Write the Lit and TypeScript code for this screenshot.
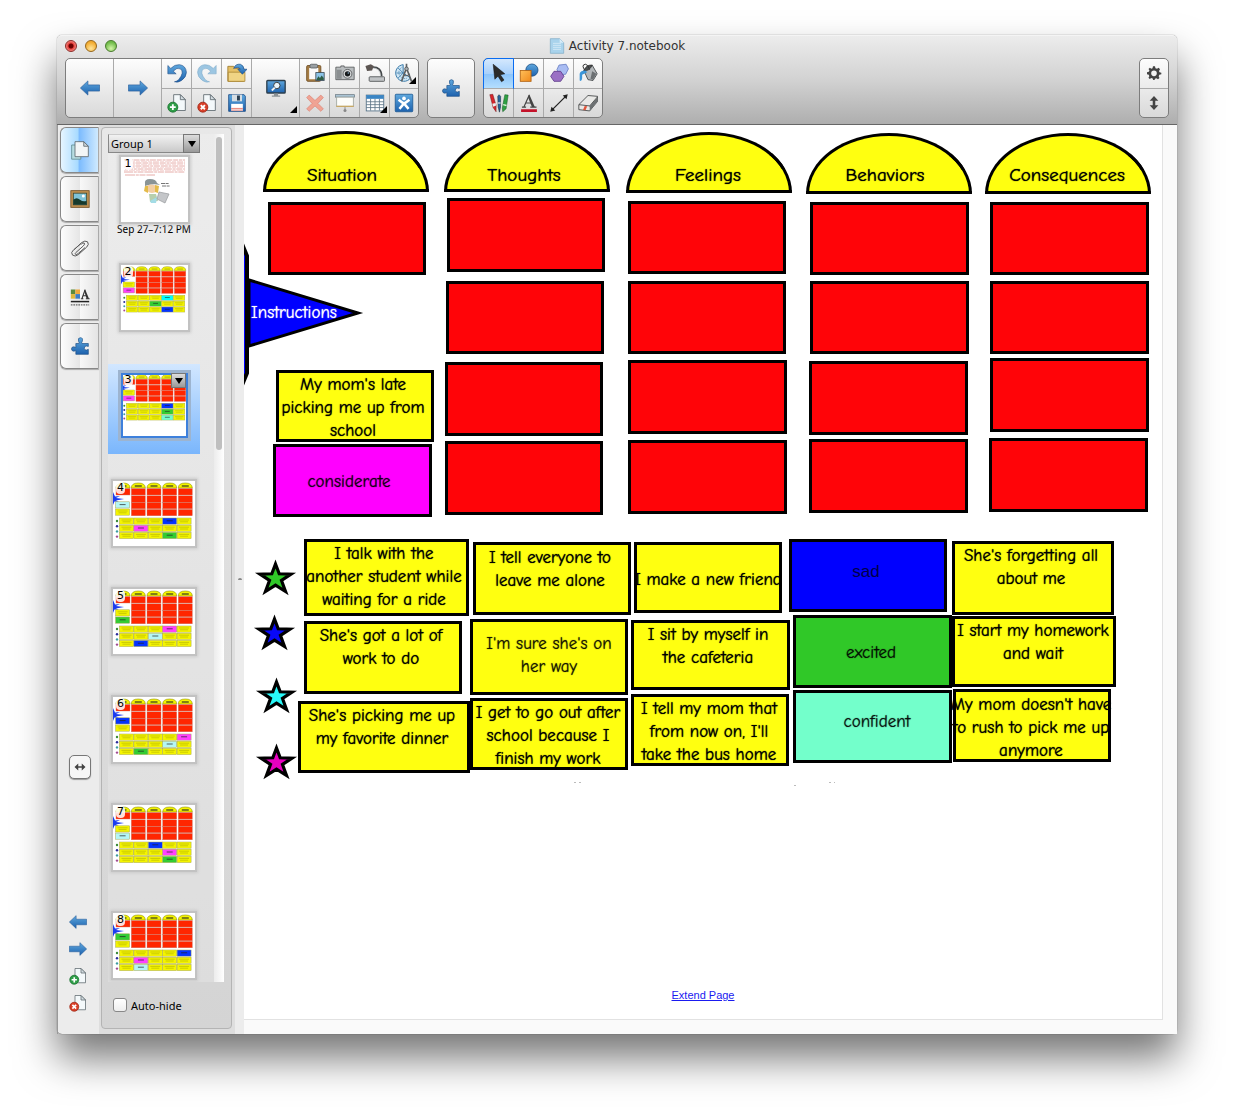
import { LitElement, html, svg, css, nothing } from "lit";
import { customElement, property, state } from "lit/decorators.js";
import { classMap } from "lit/directives/class-map.js";
import { styleMap } from "lit/directives/style-map.js";

type Box = [x: number, y: number, w: number, h: number];

const box = ([x, y, w, h]: Box) =>
  styleMap({ left: `${x}px`, top: `${y}px`, width: `${w}px`, height: `${h}px` });

/* ---------- board content ---------- */

const domes: Box[] = [
  [19, 6, 166, 61], [200, 6, 166, 61], [382, 7, 166, 61], [562, 8, 166, 61], [741, 8, 166, 61],
];

const slots: Box[] = [
  [24, 77, 158, 73],
  [203, 73, 158, 74], [202, 156, 158, 73], [201, 237, 158, 74], [201, 316, 158, 74],
  [384, 76, 158, 73], [384, 156, 158, 73], [384, 235, 159, 74], [384, 315, 159, 74],
  [566, 77, 159, 73], [566, 156, 159, 73], [565, 236, 159, 74], [565, 314, 159, 74],
  [746, 77, 159, 73], [746, 156, 159, 73], [746, 233, 159, 74], [745, 313, 159, 74],
];

const cards: { at: Box; tone: string }[] = [
  { at: [32, 245, 158, 72], tone: "yellow" },
  { at: [29, 319, 159, 73], tone: "magenta" },
  { at: [60, 414, 165, 77], tone: "yellow" },
  { at: [229, 417, 158, 73], tone: "yellow" },
  { at: [390, 417, 148, 71], tone: "yellow" },
  { at: [545, 414, 158, 73], tone: "blue" },
  { at: [708, 416, 162, 74], tone: "yellow" },
  { at: [60, 496, 158, 73], tone: "yellow" },
  { at: [226, 494, 158, 76], tone: "yellow" },
  { at: [387, 495, 159, 70], tone: "yellow" },
  { at: [549, 490, 159, 73], tone: "green" },
  { at: [708, 491, 164, 71], tone: "yellow" },
  { at: [54, 576, 172, 72], tone: "yellow" },
  { at: [226, 573, 158, 72], tone: "yellow" },
  { at: [387, 569, 158, 72], tone: "yellow" },
  { at: [549, 565, 159, 73], tone: "aqua" },
  { at: [709, 564, 158, 73], tone: "yellow" },
];

const LABEL_WIDTH = 200;
const labels: { cx: number; y: number; lines: string[]; kind?: string }[] = [
  { cx: 98, y: 39, lines: ["Situation"], kind: "heading" },
  { cx: 280, y: 39, lines: ["Thoughts"], kind: "heading" },
  { cx: 464, y: 39, lines: ["Feelings"], kind: "heading" },
  { cx: 641, y: 39, lines: ["Behaviors"], kind: "heading" },
  { cx: 823, y: 39, lines: ["Consequences"], kind: "heading" },
  { cx: 50, y: 176, lines: ["Instructions"], kind: "pale" },
  { cx: 109, y: 248, lines: ["My mom's late", "picking me up from", "school"] },
  { cx: 105, y: 345, lines: ["considerate"], kind: "soft" },
  { cx: 140, y: 417, lines: ["I talk with the", "another student while", "waiting for a ride"] },
  { cx: 306, y: 421, lines: ["I tell everyone to", "leave me alone"] },
  { cx: 464, y: 443, lines: ["I make a new friend"] },
  { cx: 622, y: 435, lines: ["sad"], kind: "plain" },
  { cx: 787, y: 419, lines: ["She's forgetting all", "about me"] },
  { cx: 137, y: 499, lines: ["She's got a lot of", "work to do"] },
  { cx: 305, y: 507, lines: ["I'm sure she's on", "her way"], kind: "soft" },
  { cx: 464, y: 498, lines: ["I sit by myself in", "the cafeteria"] },
  { cx: 627, y: 516, lines: ["excited"], kind: "soft" },
  { cx: 789, y: 494, lines: ["I start my homework", "and wait"] },
  { cx: 138, y: 579, lines: ["She's picking me up", "my favorite dinner"] },
  { cx: 304, y: 576, lines: ["I get to go out after", "school because I", "finish my work"] },
  { cx: 465, y: 572, lines: ["I tell my mom that", "from now on, I'll", "take the bus home"] },
  { cx: 633, y: 585, lines: ["confident"], kind: "soft" },
  { cx: 787, y: 568, lines: ["My mom doesn't have", "to rush to pick me up", "anymore"] },
];

const stars: { x: number; y: number; fill: string }[] = [
  { x: 11, y: 434, fill: "#30c828" },
  { x: 10, y: 489, fill: "#0808f8" },
  { x: 12, y: 552, fill: "#28f8f8" },
  { x: 12, y: 618, fill: "#e800c0" },
];

/* ---------- page sorter content ---------- */

const ink: Record<string, string> = {
  y: "#f4f400", m: "#ff40ff", g: "#33cc33", b: "#0433ff", c: "#00fdff", p: "#b4f6f6", a: "#73fdd0",
};

interface Page { side: string; rows: string[]; small?: boolean; caption?: string }

const pages: Page[] = [
  { side: "", rows: [], small: true, caption: "Sep 27–7:12 PM" },
  { side: "ym", rows: ["yyycy", "yygyy", "yyyby"], small: true },
  { side: "ym", rows: ["yyyby", "yyygy", "yyyay"], small: true },
  { side: "py", rows: ["yyyby", "ymyyy", "yyygy"] },
  { side: "yg", rows: ["yyymy", "yypyy", "ybyyy"] },
  { side: "by", rows: ["yyyym", "yyypy", "ygyyy"] },
  { side: "yp", rows: ["yybyy", "yyymy", "yyygy"] },
  { side: "gy", rows: ["yyyyb", "ymyyy", "ypyyy"] },
];

@customElement("page-thumb")
export class PageThumb extends LitElement {
  @property({ attribute: false }) page!: Page;

  static styles = css`
    :host { display: block; }
    .art { display: block; width: 100%; height: 100%; }
  `;

  private cover() {
    return svg`
      ${[3, 6, 9, 12, 15, 18].map((y, i) => svg`<path d="M${3 + (i % 2)} ${y} H${i === 5 ? 34 : 64}" stroke="#e3a39e" stroke-width=".9" stroke-dasharray="${5 + i} .8 3 .7 6 .9"/>`)}
      ${[4.5, 7.5, 10.5, 13.5].map((y) => svg`<path d="M3 ${y} H64" stroke="#f4d6d4" stroke-width=".8" stroke-dasharray="4 1 6 1"/>`)}
      <path d="M24 27 Q23 22 29 22 Q35 22 36 26 L39 28 Q32 26 24 29Z" fill="#8a9496"/>
      <path d="M25 29 Q30 26 36 29 L36 34 Q31 38 26 34Z" fill="#f3cfa4"/>
      <path d="M24 29 L27 29 L27 36 L23 34Z M34 28 L38 29 L37 36 L34 35Z" fill="#e4bb4a"/>
      <path d="M28 37 L35 37 L37 44 L29 45Z" fill="#b7cfae"/>
      <path d="M29 44 L36 40 L35 46 L30 46Z" fill="#a3dce6"/>
      <path d="M38 35 L48 37 L44 46 L36 42Z" fill="#c4c6c9" stroke="#96999c" stroke-width=".7"/>
      <path d="M40 26.500 H48 M41 29 H49" stroke="#666" stroke-width=".9" stroke-dasharray="4 .6 3 .5"/>`;
  }

  private board() {
    const { side, rows, small } = this.page;
    const cols = [3, 18.3, 34, 49.7, 65.3];
    const reds = [7.6, 14.8, 21.4, 28.4];
    const card = (x: number, y: number, k: string) => svg`
      <rect x=${x} y=${y} width="14" height="6.2" fill=${ink[k]} stroke="#a8a850" stroke-width=".5"/>
      ${k === "y"
        ? svg`<path d="M${x + 2} ${y + 2} h10 M${x + 3} ${y + 3.8} h8" stroke="#a0a000" stroke-width=".5"/>`
        : svg`<path d="M${x + 4} ${y + 2.8} h6" stroke="#222" stroke-opacity=".7" stroke-width="1"/>`}`;
    return svg`
      ${cols.map((x) => svg`<path d="M${x} 7 Q${x} 2 ${x + 7} 2 Q${x + 14} 2 ${x + 14} 7Z" fill="#f4f400" stroke="#90900a" stroke-width=".6"/>
        <path d="M${x + 3.5} 5 h7" stroke="#222" stroke-width=${small ? 0.4 : 1.1}/>`)}
      ${cols.map((x, c) => reds.map((y, r) =>
        c === 0 && r > 0 ? nothing
          : svg`<rect x=${x} y=${y} width="14" height="6.4" fill="#ff2600" stroke="#c87c6c" stroke-width=".4"/>`))}
      <path d="M0 11 L2 15.500 L7 15 L3 17 L11 18 L3 19.400 L6 21 L1.500 20.500 L0 24Z" fill="#1c3cf0"/>
      ${card(2.6, 20.8, side[0])}${card(2.6, 28, side[1])}
      ${rows.map((row, r) => [...row].map((k, c) => card(6.5 + c * 14.4, 37 + r * 7.2, k)))}
      ${["#3a8a3a", "#2a2a9a", "#3a9aa0", "#a04a90"].map((f, i) => svg`<circle cx="4" cy=${40 + i * 5.2} r="1.2" fill=${f}/>`)}`;
  }

  render() {
    const cover = !this.page.side;
    return html`<svg class="art" viewBox=${cover ? "0 0 67 65" : "0 0 82 65"} preserveAspectRatio="xMinYMin meet" aria-hidden="true">
      ${cover ? this.cover() : this.board()}
    </svg>`;
  }
}

/* ---------- icons ---------- */

const sheet = svg`<path d="M8 2 H16 L22 8 V21 H8Z" fill="#f4f9fb" stroke="#5d686e"/><path d="M16 2 V8 H22Z" fill="#d4dde2" stroke="#5d686e"/>`;
const puzzle = svg`<path d="M7 9 H10.500 Q11.500 8 10.300 6.500 Q9 2 12.500 2 Q16 2 14.700 6.500 Q13.500 8 14.500 9 H22 V12.500 Q19 11.300 17.700 12.800 Q16.500 15 18 16.500 Q19.500 17.500 22 16 V22 H7 V17.500 Q4.500 19 2.500 17.500 Q1 15.500 2.500 13.500 Q4.500 12.300 7 13.800Z" fill="url(#blue)" stroke="#1b4f86" stroke-width=".8"/>`;

const icons: Record<string, unknown> = {
  back: svg`<path d="M.500 12 L9.500 3.500 V8.300 H23.500 V15.700 H9.500 V20.500Z" fill="url(#blue)" stroke="#2a5f9c" stroke-width=".8"/>`,
  forward: svg`<path d="M23.500 12 L14.500 3.500 V8.300 H.500 V15.700 H14.500 V20.500Z" fill="url(#blue)" stroke="#2a5f9c" stroke-width=".8"/>`,
  undo: svg`<path d="M1 3 V13 H11 L7.500 9.800 Q12 4.800 16 7 Q21.500 11 14 20 Q11 22.500 9 22.500 Q13 24 17.500 21 Q23.500 16.500 23.300 11 Q22.500 3 15 2 Q9 1.500 4.500 6.500Z" fill="url(#blue)" stroke="#1d4c85" stroke-width=".7"/>`,
  redo: svg`<path d="M23 3 V13 H13 L16.500 9.800 Q12 4.800 8 7 Q2.500 11 10 20 Q13 22.500 15 22.500 Q11 24 6.500 21 Q.500 16.500 .700 11 Q1.500 3 9 2 Q15 1.500 19.500 6.500Z" fill="#9cc6e2" stroke="#7eabc9" stroke-width=".7"/>`,
  open: svg`<path d="M1 4 H8 L10 6.500 H20 V22 H1Z" fill="#e6c065" stroke="#9c7a2c"/><path d="M1.500 22 V11 H21.500 V22Z" fill="#f0d484" stroke="#a98634"/><path d="M8 6.500 Q10 .800 16 1.500 Q20 2.800 20.500 7.500 H24 L18.500 13.500 L13 7.500 H16 Q14 3.800 8 6.500Z" fill="url(#blue)" stroke="#1d4c85" stroke-width=".8"/>`,
  addPage: svg`${sheet}<circle cx="7" cy="17" r="6" fill="#2f9e48" stroke="#17702c"/><path d="M7 13.500 V20.500 M3.500 17 H10.500" stroke="#fff" stroke-width="2.200"/>`,
  deletePage: svg`${sheet}<circle cx="7" cy="17" r="6" fill="#d9402a" stroke="#9c2413"/><path d="M4.500 14.500 L9.500 19.500 M9.500 14.500 L4.500 19.500" stroke="#fff" stroke-width="2.200"/>`,
  save: svg`<path d="M2 2 H20.500 L22 4 V22 H2Z" fill="url(#blue)" stroke="#1d4c85"/><rect x="6" y="2" width="12" height="8" fill="#d5dde3"/><rect x="12" y="3" width="3.500" height="6" fill="#2b3f52"/><rect x="5" y="13" width="14" height="8.500" fill="#fff"/><path d="M5 18.500 H19 M5 20.500 H19" stroke="#e0685a" stroke-width="1"/>`,
  screen: svg`<rect x="1" y="3" width="22" height="15" rx="1" fill="url(#blue)" stroke="#2c3e4c" stroke-width="1.600"/><circle cx="13" cy="9" r="3.800" fill="#eaf5fb" stroke="#222"/><path d="M10.500 11.500 L7 15" stroke="#f4f4f4" stroke-width="2.200"/><path d="M9.500 18.500 H14.500 V21 H17 V22.500 H7 V21 H9.500Z" fill="#8c9296"/>`,
  paste: svg`<rect x="2" y="3" width="17" height="19" rx="1.500" fill="#a57c44" stroke="#6d4c20"/><rect x="5" y="6" width="11" height="13.500" fill="#fafafa"/><rect x="6" y="1.500" width="9" height="4.500" rx="1.500" fill="#9aa0a4" stroke="#5a6064"/><rect x="13" y="11.500" width="10" height="9.500" fill="#8cc4e8" stroke="#3c4a54"/><path d="M13.500 20.500 L16 16 L18 18 L20 15 L22.500 18 V20.500Z" fill="#2e5e46"/>`,
  camera: svg`<path d="M1 5 H7 V3.500 H11 V5 H23 V20 H1Z" fill="#b9bdbf" stroke="#55585a"/><rect x="2" y="8" width="6" height="11" fill="#8b8f91"/><circle cx="15" cy="13" r="5.300" fill="#d9dcdd" stroke="#505355"/><circle cx="15" cy="13" r="3.200" fill="#16191b"/><circle cx="16" cy="12" r="1" fill="#7fa4c2"/>`,
  docCam: svg`<path d="M8 5 Q20 4 20 16" fill="none" stroke="#44484a" stroke-width="2"/><path d="M8 5.800 Q18.500 6 18.800 16" fill="none" stroke="#b8bcbe" stroke-width=".8"/><path d="M.500 3.500 L7 1.500 L10.500 3.500 L8.500 9 L2.500 9.500Z" fill="#5c5552"/><rect x="5" y="16.500" width="18.500" height="5.500" rx="1" fill="#c0c3c5" stroke="#4c4f51"/>`,
  measure: svg`<path d="M11 2 A10 10 0 1 0 20 18 L11 12Z" fill="#cfe6f4" stroke="#3c7cab" stroke-width="1.200"/><path d="M10 5 A7 7 0 1 0 16 18" fill="none" stroke="#3c7cab" stroke-dasharray="1 1"/><path d="M3 12 H11 M5 6 L11 12 L5 18" stroke="#3c7cab"/><path d="M15 1 V7 M15 6 L9 22 M15 6 L21 22" stroke="#5d6163" stroke-width="2"/><path d="M11 14 Q15 17 19 13" fill="none" stroke="#5d6163" stroke-width="1.300"/><circle cx="15" cy="7" r="2.200" fill="#aab0b3" stroke="#4c4f51"/>`,
  remove: svg`<path d="M5 2.500 L12 9 L19 2.500 L22 5.500 L15.500 12.500 L22 19 L19 22 L12 15.500 L5 22 L2 19 L8.500 12.500 L2 5.500Z" fill="#f0a394" stroke="#d98474" stroke-width=".8"/>`,
  shade: svg`<rect x="0.500" y="2" width="23" height="3" fill="#a9c3d4" stroke="#64727b" stroke-width=".8"/><rect x="2" y="5" width="20" height="11" fill="#fdfdfa" stroke="#9fa59f"/><path d="M1.500 16 H22.500" stroke="#c8a862" stroke-width="1.500"/><path d="M12 17 V20" stroke="#777"/><circle cx="12" cy="21" r="1.800" fill="#888"/>`,
  table: svg`<rect x="1.500" y="2.500" width="21" height="19" fill="#fff" stroke="#4c6a80"/><rect x="1.500" y="2.500" width="21" height="4.500" fill="#3a85c4"/><path d="M1.500 10.500 H22.500 M1.500 14 H22.500 M1.500 17.500 H22.500 M6.700 7 V21 M12 7 V21 M17.300 7 V21" stroke="#5d7485"/>`,
  smart: svg`<rect x="1.500" y="1.500" width="21" height="21" rx="1" fill="url(#blue)" stroke="#1d5a94"/><path d="M5.500 8 L12 13 L18.500 8 M6.500 19 L12 12.500 L17.500 19" fill="none" stroke="#fff" stroke-width="3"/><circle cx="12" cy="6.500" r="2.200" fill="#fff"/>`,
  puzzle,
  select: svg`<path d="M5 1.500 L19 13 L13.500 14 L18 20.500 L15 22.500 L10.800 15.800 L7 19.500Z" fill="#2b2b2b" stroke="#111" stroke-width=".6"/>`,
  shapes: svg`<circle cx="15.500" cy="8.500" r="7.300" fill="url(#blue)" stroke="#1b4f86"/><rect x="1.500" y="9" width="13" height="13" fill="url(#orange)" stroke="#b0600e"/>`,
  polygons: svg`<path d="M12 2.500 L20.500 1.500 L23.300 7 L20 13.500 L13 14 L9.500 8Z" fill="#a9bcf2" stroke="#6a7fc4"/><path d="M6 10 H14 L18 16 L14 22 H6 L2 16Z" fill="#9a70c4" stroke="#5d3a8a"/>`,
  fill: svg`<path d="M7 9 L17 2.500 L23 13 L18 21 L12 20Z" fill="#b3b7ba" stroke="#3e4244"/><path d="M7 9 Q14 10 17 2.500 Q10 2 7 9Z" fill="#4a4e50" stroke="#333"/><path d="M17 10 L22 13 L18 20 L15 19Z" fill="#6c7073"/><path d="M9 10 Q3 2 9 1.500 Q12 1.500 14 8" fill="none" stroke="#333" stroke-width="1.200"/><path d="M9 9 Q3 9 2 13 V21 Q4.500 23 5 18 V14 L11 11Z" fill="#3b95d8"/>`,
  pens: svg`<path d="M1 2 L4.500 1.500 L8.500 15 L8.500 22.500 L5 17.500Z" fill="#d8262c" stroke="#701014" stroke-width=".6"/><path d="M4 13 L8 12 L8.500 15 L5 16.500Z" fill="#eee"/><path d="M10.500 4 L12 2 L14 4 L13.800 17 L12.500 23 L11 17Z" fill="#27649c" stroke="#123" stroke-width=".6"/><path d="M10.700 12 H14" stroke="#dde" stroke-width="1.500"/><path d="M19 2 L23 2.500 L20.500 19 L16.500 22.500 L16 18Z" fill="#2fa043" stroke="#145522" stroke-width=".6"/><path d="M17 14 L21 15" stroke="#d9f2d9" stroke-width="1.600"/>`,
  textTool: svg`<path d="M3.500 17 H8.500 M13.500 17 H21 M6 16.500 L12.300 2.500 M8.500 12 H15.500" fill="none" stroke="#444" stroke-width="1.400"/><path d="M12.300 1.500 L19 16.800 H15.500 L10.800 5Z" fill="#444"/><rect x="2.500" y="19.500" width="19" height="3.300" fill="#c4122a"/>`,
  line: svg`<path d="M4 20 L20 4" stroke="#222" stroke-width="1.500"/><path d="M22.500 1.500 L21 7.500 L16.500 3Z M1.500 22.500 L3 16.500 L7.500 21Z" fill="#222"/>`,
  eraser: svg`<path d="M1 14 L12 3 L23.500 4 V10 L14 21.500 L1 20Z" fill="#e9e9e7" stroke="#3e4142"/><path d="M14 16 L23.500 5 V10 L14 21.500Z" fill="#6c7072"/><path d="M1 14 L14 15.500 L23.500 4.500" fill="none" stroke="#3e4142"/><path d="M8 15.500 L11 15.800 L9 20.800 L6 20.500Z" fill="#e0563c"/>`,
  gear: svg`<path d="M10.500 2 H13.500 L14.200 4.800 L16.500 5.800 L19 4.300 L21 6.500 L19.500 9 L20.200 10.800 L23 11.500 V14 L20 14.800 L19 17 L20.200 19.500 L18 21.300 L15.700 19.800 L13.500 20.500 L12.800 22.500 H10.800 L10 20.300 L8 19.500 L5.500 21 L3.700 19 L5 16.800 L4.200 14.600 L1.500 13.800 V11 L4.300 10.300 L5.200 8.200 L3.800 6 L5.800 4.200 L8 5.500 L9.800 4.800Z M12 8.300 A4.200 4.200 0 1 0 12 16.700 A4.200 4.200 0 1 0 12 8.300Z" fill="#444" fill-rule="evenodd"/>`,
  vertical: svg`<path d="M12 1.500 L18.500 8.500 H13.900 V15.500 H18.500 L12 22.500 L5.500 15.500 H10.100 V8.500 H5.500Z" fill="#444"/>`,
  horizontal: svg`<path d="M1 12 L8.500 5 V10.300 H15.500 V5 L23 12 L15.500 19 V13.700 H8.500 V19Z" fill="#444"/>`,
  pagesTab: svg`<path d="M2 6 H13 V23 H2Z" fill="#b7dde2" stroke="#5f8c92"/><path d="M6 2 H16.500 L22 7.500 V20 H6Z" fill="#f2f5f6" stroke="#5d686e"/><path d="M16.500 2 V7.500 H22Z" fill="#cfd8dc" stroke="#5d686e"/>`,
  gallery: svg`<rect x="1" y="2" width="22" height="20" fill="#c09050" stroke="#6d4c20"/><rect x="4" y="5" width="16" height="14" fill="#7ec3d8" stroke="#3c4a34"/><path d="M4 13 Q8 9 12 13 Q16 16 20 14 V19 H4Z" fill="#173a2c"/><circle cx="16" cy="8.500" r="1.800" fill="#fff"/>`,
  clip: svg`<path d="M5 14 L14 5.500 Q18 2.500 21 4.500 Q23.500 7.500 20 11 L10 20 Q6 23 3 20.500 Q.500 17.500 4 14.500 L13.500 6.500 M7 17.500 L16 9.500 Q18.500 7 17 6 Q15.500 5.500 13.500 7.500 M7 17.500 Q5.500 19 6.800 19.800 Q8 20.300 10 18.500 L18 11.500" fill="none" stroke="#5c5c5c" stroke-width="1.200"/>`,
  properties: svg`<rect x="1" y="3" width="5.500" height="5.500" fill="#5c8a3c"/><rect x="6.500" y="3" width="5.500" height="5.500" fill="#f0a83c"/><rect x="1" y="8.500" width="5.500" height="5.500" fill="#e0b83c"/><rect x="6.500" y="8.500" width="5.500" height="5.500" fill="#3c7cc4"/><path d="M13 14 H16 M19 14 H23.500 M14.500 13.500 L18 3.500 M15.500 10.500 H20.500" fill="none" stroke="#333" stroke-width="1.300"/><path d="M18 2.500 L22.800 14 H20 L17 5Z" fill="#333"/><path d="M1 17.500 H23" stroke="#222" stroke-width="1.800"/><path d="M1 21.500 H23" stroke="#222" stroke-dasharray="2 1"/>`,
  document: svg`<path d="M2 1 H16 L22 7 V23 H2Z" fill="#a9d3ec" stroke="#7aa9c6"/><path d="M6 8 H18 M6 11 H18 M6 14 H18 M6 17 H18" stroke="#e4f3fb"/><path d="M16 1 V7 H22Z" fill="#d8edf8"/>`,
};

type Tool = { icon: string; name: string; menu?: boolean };
const t = (icon: string, name: string, menu = false): Tool => ({ icon, name, menu });

const toolGroups: Tool[][][] = [
  [
    [t("back", "Previous page")],
    [t("forward", "Next page")],
    [t("undo", "Undo"), t("addPage", "Add page")],
    [t("redo", "Redo"), t("deletePage", "Delete page")],
    [t("open", "Open"), t("save", "Save")],
    [t("screen", "View screens", true)],
    [t("paste", "Paste"), t("remove", "Delete")],
    [t("camera", "Screen capture"), t("shade", "Screen shade")],
    [t("docCam", "Document camera"), t("table", "Table", true)],
    [t("measure", "Measurement tools", true), t("smart", "Exchange")],
  ],
  [[t("puzzle", "Add-ons")]],
  [
    [t("select", "Select"), t("pens", "Pens")],
    [t("shapes", "Shapes"), t("textTool", "Text")],
    [t("polygons", "Regular polygons"), t("line", "Lines")],
    [t("fill", "Fill"), t("eraser", "Eraser")],
  ],
];

const systemGroup: Tool[][] = [[t("gear", "Customize toolbar"), t("vertical", "Move toolbar")]];

const tabs = [
  t("pagesTab", "Page sorter"), t("gallery", "Gallery"), t("clip", "Attachments"),
  t("properties", "Properties"), t("puzzle", "Add-ons"),
];

const quick = [
  t("back", "Previous page"), t("forward", "Next page"), t("addPage", "Add page"), t("deletePage", "Delete page"),
];

@customElement("app-root")
export class AppRoot extends LitElement {
  @state() private tool = "select";
  @state() private tab = "pagesTab";
  @state() private current = 2;

  static styles = css`
    :host {
      display: flex;
      box-sizing: border-box;
      height: 100vh;
      min-height: 900px;
      padding: 35px 57px 79px;
      background: #fff;
      color: #000;
      font-family: "Lucida Grande", "Noto Sans", sans-serif;
      font-size: 11px;
    }
    *, *::before { box-sizing: border-box; }
    button { margin: 0; padding: 0; border: 0; background: none; font: inherit; color: inherit; }
    .defs { position: absolute; width: 0; height: 0; }
    .icon { display: block; width: 20px; height: 20px; }

    .window {
      flex: 1;
      min-width: 0;
      display: flex;
      flex-direction: column;
      border-radius: 5px;
      background: #ececec;
      box-shadow: 0 0 1px rgba(0, 0, 0, 0.7), 0 24px 40px rgba(0, 0, 0, 0.54);
      overflow: clip;
      overflow-clip-margin: 80px;
    }

    .chrome {
      background: linear-gradient(#ececec, #d2d2d2 50%, #aeaeae);
      border-top: 1px solid #f4f4f4;
      border-bottom: 1px solid #666;
      border-radius: 5px 5px 0 0;
    }
    .titlebar { display: grid; grid-template-columns: 1fr auto 1fr; align-items: center; height: 22px; padding: 0 8px 2px; }
    .lights { display: flex; gap: 8px; }
    .light { width: 12px; height: 12px; border-radius: 50%; border: 1px solid #777; }
    .light.close { background: radial-gradient(circle at 50% 50%, #6b0000 0 2px, #e8403c 3px, #f8a8a0 6px); border-color: #8c2a26; }
    .light.min { background: radial-gradient(circle at 50% 75%, #ffe59a, #f2ab30 70%); border-color: #96661a; }
    .light.max { background: radial-gradient(circle at 50% 75%, #d4f5a8, #6fbb48 70%); border-color: #487a2c; }
    .title { display: flex; align-items: center; gap: 4px; margin: 0; font-family: "Lucida Grande", "DejaVu Sans", sans-serif; font-size: 12px; font-weight: 400; color: #333; line-height: 20px; }
    .title .icon { width: 16px; height: 16px; }

    .toolbar { display: flex; gap: 8px; padding: 0 8px 6px; }
    .group { display: flex; height: 60px; border: 1px solid #7d7d7d; border-radius: 5px; background: linear-gradient(#fdfdfd, #d9d9d9); }
    .group.end { margin-left: auto; }
    .stack { display: flex; flex-direction: column; width: 30px; border-left: 1px solid #aaa; }
    .stack.wide { width: 48px; }
    .stack:first-child { width: 29px; border-left: 0; }
    .stack.wide:first-child { width: 47px; }
    .stack:last-child { width: 29px; }
    .stack:only-child { width: 28px; }
    .stack.wide:only-child { width: 46px; }
    .tool { position: relative; flex: 1; display: grid; place-items: center; }
    .tool + .tool { border-top: 1px solid #aaa; }
    .tool.on { background: linear-gradient(#d4e8fd, #a9d1fb 50%, #8cc4fa 51%, #b4defe); outline: 1px solid #0a6cf0; border-radius: 4px 0 0 0; }
    .tool.menu::after {
      content: "";
      position: absolute;
      right: 2px;
      bottom: 4px;
      border-left: 7px solid transparent;
      border-bottom: 7px solid #000;
    }
    .system .icon { width: 16px; height: 16px; }

    .body { flex: 1; min-height: 0; display: flex; }

    .gutter { display: flex; flex-direction: column; width: 42px; padding: 2px 0 22px 2px; border-left: 1px solid #999; }
    .tabs { display: flex; flex-direction: column; gap: 3px; }
    .tab {
      height: 46px;
      display: grid;
      place-items: center;
      border: 1px solid #888;
      border-right-color: #aaa;
      border-radius: 6px 0 0 6px;
      background: linear-gradient(90deg, #fdfdfd, #e6e6e6 50%, #f8f8f8 52%, #e4e4e4);
      box-shadow: 0 1px 1px #aaa;
    }
    .tab.on { background: linear-gradient(90deg, #e6f5ff, #a9dbff 45%, #7dbcfe 50%, #cfeaff); }
    .swap {
      align-self: center;
      display: grid;
      place-items: center;
      width: 22px;
      height: 24px;
      margin: auto 0 134px;
      border: 1px solid #777;
      border-radius: 5px;
      background: #f6f6f6;
      box-shadow: 0 1px 1px #999;
    }
    .swap .icon { width: 12px; height: 12px; }
    .quick { display: flex; flex-direction: column; align-items: center; gap: 9px; padding-right: 3px; }
    .quick .icon { width: 18px; height: 18px; }

    .side { width: 136px; padding: 2px 3px 5px 2px; background: #dedede; }
    .panel {
      height: 100%;
      display: flex;
      flex-direction: column;
      border: 1px solid #b4b4b4;
      border-radius: 4px;
      background: linear-gradient(#e8e8e8, #d4d4d4);
      padding: 6px 7px 0 6px;
    }
    .sorter { flex: 1; min-height: 0; display: flex; }
    .list { flex: 1; min-width: 0; display: flex; flex-direction: column; background: rgba(255, 255, 255, 0.2); }
    .picker { position: relative; z-index: 1; width: 92px; height: 19px; flex: none; }
    .picker select {
      appearance: none;
      width: 100%;
      height: 100%;
      margin: 0;
      padding: 0 18px 0 2px;
      border: 1px solid #888;
      border-top-color: #ccc;
      border-radius: 0;
      background: linear-gradient(#f2f2f2, #c9c9c9);
      font: inherit;
      color: #000;
      line-height: 16px;
    }
    .down { position: absolute; right: 0; top: 0; display: grid; place-items: center; width: 17px; height: 100%; border: 1px solid #777; background: linear-gradient(#ddd, #999); pointer-events: none; }
    .down::before, .drop::before { content: ""; border: 4px solid transparent; border-top: 6px solid #000; border-bottom: 0; }

    .pages { flex: 1; min-height: 0; overflow-y: auto; scrollbar-width: none; margin: 0; padding: 0; list-style: none; display: flex; flex-direction: column; gap: 18px; }
    .page { position: relative; flex: none; width: 92px; height: 90px; }
    .page:first-child { margin-top: -5px; }
    .page.on { background: linear-gradient(#d2e7ff, #7ab6fc); }
    .pick { display: flex; flex-direction: column; align-items: center; gap: 1px; width: 100%; padding-top: 9px; }
    .frame { position: relative; display: block; width: 82px; height: 65px; background: #fff; box-shadow: 0 0 0 2px #c2c2c2, 0 0 3px 3px #cacaca; }
    .frame.small { width: 67px; }
    .page.on .frame { box-shadow: 0 0 0 3px #9db4cf; }
    .page.on .frame::after { content: ""; position: absolute; inset: 0; border: 2px solid #3d80dc; }
    .frame page-thumb { height: 100%; }
    .num { position: absolute; left: 3px; top: 1px; padding: 0 1px; border-radius: 4px; background: rgba(255, 255, 255, 0.85); line-height: 12px; font-family: "Lucida Grande", "DejaVu Sans", sans-serif; font-size: 11px; }
    .caption { white-space: nowrap; font-size: 10px; line-height: 12px; }
    .drop { position: absolute; right: 14px; top: 9px; width: 15px; height: 15px; display: grid; place-items: center; border: 1px solid #777; background: linear-gradient(#ddd, #999); }
    .track { width: 10px; padding: 3px 2px 0; background: linear-gradient(90deg, #ececec, #fff); }
    .thumb { height: 37%; border-radius: 3px; background: #bfbfbf; }
    .hide { display: flex; align-items: center; gap: 4px; height: 46px; padding-left: 5px; flex: none; }
    .hide input { appearance: none; width: 14px; height: 14px; margin: 0; border: 1px solid #888; border-radius: 3px; background: linear-gradient(#fff, #eee); }

    .splitter { width: 9px; display: grid; place-items: center; background: #ececec; }
    .grip { width: 4px; height: 3px; border-top: 2px solid #888; border-radius: 2px 2px 0 0; }

    .view { flex: 1; min-width: 0; display: flex; padding: 0 14px 14px 0; background: #fafafa; }
    .sheet { position: relative; flex: 1; min-width: 0; overflow: hidden; display: flex; flex-direction: column; justify-content: flex-end; align-items: center; padding-bottom: 17px; background: #fff; border: solid #e2e2e2; border-width: 0 1px 1px 0; }
    .extend { position: relative; font: 11px/14px "Liberation Sans", Arial, sans-serif; color: #1a1af0; }
    .shape { position: absolute; border: 3px solid #000; }
    .dome { border-radius: 50% 50% 0 0 / 100% 100% 0 0; }
    .dome, .yellow { background: #ffff10; }
    .slot { background: #ff0408; }
    .magenta { background: #ff00ff; }
    .blue { background: #0000ff; }
    .green { background: #30c828; }
    .aqua { background: #73ffcb; }
    .drawing { position: absolute; left: 0; top: 0; width: 100%; height: 100%; }
    .label { position: absolute; width: 200px; margin: 0; text-align: center; white-space: pre; font-family: "Comic Sans MS", "Comic Neue", "Noto Sans", sans-serif; font-size: 17px; line-height: 23px; text-shadow: 0 0 1px currentColor; }
    .label.heading { font-size: 19px; }
    .label.pale { color: #fff; }
    .label.soft { color: rgba(0, 0, 0, 0.8); }
    .label.plain { font-family: "Liberation Sans", Arial, sans-serif; color: #000048; text-shadow: none; }
  `;

  private icon(name: string) {
    return html`<svg class="icon" viewBox="0 0 24 24" aria-hidden="true" fill="none">${icons[name]}</svg>`;
  }

  private group(stacks: Tool[][], extra = "") {
    return html`<div class="group ${extra}" role="group">
      ${stacks.map((stack) => html`<div class=${classMap({ stack: true, wide: stack.length === 1 })}>
        ${stack.map((b) => html`<button
          class=${classMap({ tool: true, on: b.icon === this.tool, menu: !!b.menu })}
          aria-label=${b.name}
          @click=${() => (this.tool = b.icon)}
        >${this.icon(b.icon)}</button>`)}
      </div>`)}
    </div>`;
  }

  private header() {
    return html`<header class="chrome">
      <div class="titlebar">
        <div class="lights">
          <button class="light close" aria-label="Close"></button>
          <button class="light min" aria-label="Minimize"></button>
          <button class="light max" aria-label="Zoom"></button>
        </div>
        <h1 class="title">${this.icon("document")}Activity 7.notebook</h1>
      </div>
      <div class="toolbar">
        ${toolGroups.map((g) => this.group(g))}
        ${this.group(systemGroup, "end system")}
      </div>
    </header>`;
  }

  private gutter() {
    return html`<nav class="gutter">
      <div class="tabs">
        ${tabs.map((b) => html`<button
          class=${classMap({ tab: true, on: b.icon === this.tab })}
          aria-label=${b.name}
          @click=${() => (this.tab = b.icon)}
        >${this.icon(b.icon)}</button>`)}
      </div>
      <button class="swap" aria-label="Move sidebar">${this.icon("horizontal")}</button>
      <div class="quick">
        ${quick.map((b) => html`<button aria-label=${b.name}>${this.icon(b.icon)}</button>`)}
      </div>
    </nav>`;
  }

  private sorter() {
    return html`<aside class="side"><div class="panel">
      <div class="sorter">
        <div class="list">
          <div class="picker">
            <select aria-label="Group"><option>Group 1</option></select>
            <span class="down"></span>
          </div>
          <ol class="pages">
            ${pages.map((page, i) => html`<li class=${classMap({ page: true, on: i === this.current })}>
              <button class="pick" @click=${() => (this.current = i)}>
                <span class=${classMap({ frame: true, small: !!page.small })}>
                  <page-thumb .page=${page}></page-thumb>
                  <span class="num">${i + 1}</span>
                </span>
                ${page.caption ? html`<span class="caption">${page.caption}</span>` : nothing}
              </button>
              ${i === this.current ? html`<button class="drop" aria-label="Page menu"></button>` : nothing}
            </li>`)}
          </ol>
        </div>
        <div class="track"><div class="thumb"></div></div>
      </div>
      <label class="hide"><input type="checkbox" />Auto-hide</label>
    </div></aside>`;
  }

  private sheet() {
    return html`<main class="view"><div class="sheet">
      <svg class="drawing" aria-hidden="true">
        <path d="M-12 119 L-2 119 L3 131 V248 L-2 260 H-12Z" fill="#0000ff" stroke="#000" stroke-width="4"/>
        <path d="M5 155 L114 188 L5 221Z" fill="#0000ff" stroke="#000" stroke-width="3"/>
        ${stars.map((s) => svg`<path transform="translate(${s.x} ${s.y})"
          d="M20.500 5 L24.200 14.800 L36 15.200 L26.500 21.500 L30.500 32.500 L20.500 26.200 L10.500 32.500 L14.500 21.500 L5 15.200 L16.800 14.800Z"
          fill=${s.fill} stroke="#000" stroke-width="3.200"/>`)}
        <path d="M330 657.500 h2 m3 0 h2 M550 660.500 h2 M585 657.500 h2 m3 0 h1" stroke="#bbb" stroke-width="1"/>
      </svg>
      ${domes.map((b) => html`<div class="shape dome" style=${box(b)}></div>`)}
      ${slots.map((b) => html`<div class="shape slot" style=${box(b)}></div>`)}
      ${cards.map((c) => html`<div class="shape ${c.tone}" style=${box(c.at)}></div>`)}
      ${labels.map((l) => html`<p class="label ${l.kind ?? ""}"
        style=${styleMap({ left: `${l.cx - LABEL_WIDTH / 2}px`, top: `${l.y}px` })}>${l.lines.join("\n")}</p>`)}
      <a class="extend" href="#extend">Extend Page</a>
    </div></main>`;
  }

  render() {
    return html`
      <svg class="defs" aria-hidden="true">
        <linearGradient id="blue" x1="0" y1="0" x2="0" y2="1">
          <stop offset="0" stop-color="#5fa8de"/><stop offset="1" stop-color="#1d62ae"/>
        </linearGradient>
        <linearGradient id="orange" x1="0" y1="0" x2="1" y2="1">
          <stop offset="0" stop-color="#ffc05a"/><stop offset="1" stop-color="#f08a1c"/>
        </linearGradient>
      </svg>
      <div class="window">
        ${this.header()}
        <div class="body">
          ${this.gutter()}
          ${this.sorter()}
          <div class="splitter"><span class="grip"></span></div>
          ${this.sheet()}
        </div>
      </div>`;
  }
}
